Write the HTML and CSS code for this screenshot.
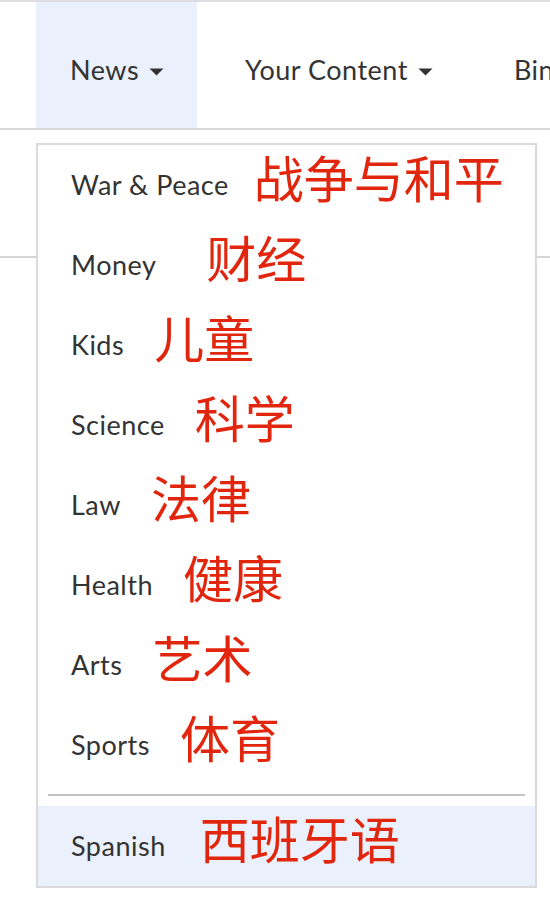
FILE: index.html
```html
<!DOCTYPE html>
<html lang="en">
<head>
    <meta charset="UTF-8">
    <meta name="viewport" content="width=device-width, initial-scale=1.0">
    <title>News menu</title>
    <link rel="stylesheet" href="styles.css">
</head>
<body>
    <nav class="topnav">
        <div class="nav-item active">
            News<svg class="caret" width="15" height="8" viewBox="0 0 15 8"><path d="M0.5 0.5h14L7.5 7.5z"/></svg>

            <!-- dropdown -->
            <div class="dropdown">
                <a class="menu-row" href="#">War &amp; Peace<span class="zh near">战争与和平</span></a>
                <a class="menu-row" href="#">Money<span class="zh wide">财经</span></a>
                <a class="menu-row" href="#">Kids<span class="zh">儿童</span></a>
                <a class="menu-row" href="#">Science<span class="zh">科学</span></a>
                <a class="menu-row" href="#">Law<span class="zh">法律</span></a>
                <a class="menu-row" href="#">Health<span class="zh">健康</span></a>
                <a class="menu-row" href="#">Arts<span class="zh">艺术</span></a>
                <a class="menu-row" href="#">Sports<span class="zh">体育</span></a>
                <hr class="divider">
                <a class="menu-row selected" href="#">Spanish<span class="zh far">西班牙语</span></a>
            </div>
        </div>
        <div class="nav-item">
            Your Content<svg class="caret" width="15" height="8" viewBox="0 0 15 8"><path d="M0.5 0.5h14L7.5 7.5z"/></svg>
        </div>
        <div class="nav-item">Bingo</div>
    </nav>
    <div class="subbar"></div>
</body>
</html>
```

FILE: styles.css
```css
html, body {
    min-height: 100vh;
}
body {
    margin: 0;
    font-family: Lato, "Noto Sans CJK SC", sans-serif;
    color: #333;
    background: #fff;
    overflow: hidden;
}
.topnav {
    display: flex;
    gap: 14px;
    padding-left: 36px;
    border-top: 2px solid #dddee2;
    border-bottom: 2px solid #d9d9d9;
    white-space: nowrap;
}
.nav-item {
    position: relative;
    height: 126px;
    box-sizing: border-box;
    padding: 28px 33px 0 34px;
    font-size: 27px;
    letter-spacing: 0.5px;
    line-height: 80px;
}
.nav-item.active {
    z-index: 2;
    background-color: #eaf1fc;
}
.caret {
    margin-left: 10px;
    vertical-align: 4px;
    fill: #333;
}
.subbar {
    height: 126px;
    border-bottom: 2px solid #d6d6d6;
}
.dropdown {
    position: absolute;
    top: 141px;
    left: 0;
    z-index: 5;
    width: 501px;
    box-sizing: border-box;
    border: 2px solid #dadada;
    background: #fff;
}
.menu-row {
    display: block;
    height: 80px;
    padding-left: 33px;
    font-size: 27px;
    letter-spacing: 0.5px;
    line-height: 80px;
    color: #333;
    text-decoration: none;
}
.menu-row.selected {
    background-color: #eaf1fc;
}
.zh {
    margin-left: 30px;
    font-family: "Noto Sans CJK SC", sans-serif;
    font-size: 50px;
    letter-spacing: 0;
    line-height: 1;
    vertical-align: -3px;
    color: #e2260e;
}
.zh.near {
    margin-left: 25px;
}
.zh.wide {
    margin-left: 50px;
}
.zh.far {
    margin-left: 34px;
}
.divider {
    margin: 9px 10px 10px;
    border: none;
    border-top: 2px solid #c3c3c3;
}
```
